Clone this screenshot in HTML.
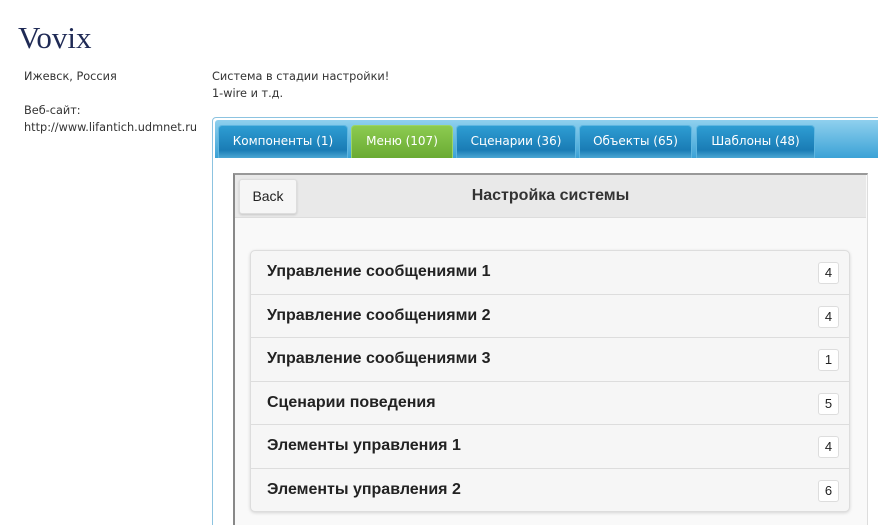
<!DOCTYPE html>
<html style="overflow:hidden;height:525px"><head><meta charset="utf-8"><style>
body{margin:0;width:878px;height:525px;overflow:hidden;background:#fff;font-family:Verdana,"DejaVu Sans",sans-serif;position:relative}
.a{position:absolute}
h1{position:absolute;left:18px;top:20px;margin:0;font:normal 31px "Liberation Serif",serif;color:#1f2a55}
.s{font-size:11.3px;color:#333;line-height:17px}
.tabs{left:212px;top:117px;width:680px;height:420px;border:1px solid #8cc3e0;border-radius:4px;background:#fff}
.band{left:215px;top:120px;width:680px;height:38px;background:linear-gradient(#8fd0ee,#3ba2d6);border-radius:3px 0 0 0}
.tab{position:absolute;top:125px;height:33px;box-sizing:border-box;border:1px solid #5eb6e0;border-bottom:none;border-radius:4px 4px 0 0;background:linear-gradient(#2e9dd3 0%,#1a7cb5 75%,#4ba7d4 100%);color:#fff;font:12px "DejaVu Sans",sans-serif;text-align:center;line-height:31px}
.tab.g{background:linear-gradient(#8ccb50,#6aab33);border-color:#9bd468}
.page{left:233px;top:173px;width:632px;height:360px;border-left:2px solid #888;border-top:2px solid #999;border-right:1px solid #ddd;background:#f9f9f9}
.hdr{left:235px;top:175px;width:631px;height:42px;background:#e9e9e9;border-bottom:1px solid #ddd;font:bold 16px "Liberation Sans",sans-serif;color:#333;text-align:center;line-height:42px}
.back{left:239px;top:179px;width:56px;height:33px;background:#f6f6f6;border:1px solid #ddd;border-radius:3px;box-shadow:0 1px 2px rgba(0,0,0,.15);font:14px "Liberation Sans",sans-serif;color:#222;text-align:center;line-height:33px}
.list{left:250px;top:250px;width:598px;border:1px solid #ddd;border-radius:5px;box-shadow:0 1px 3px rgba(0,0,0,.15);background:#f6f6f6;overflow:hidden}
.row{height:42.5px;border-top:1px solid #ddd;position:relative;font:bold 16px "Liberation Sans",sans-serif;color:#222;line-height:42px;padding-left:16px}
.row:first-child{border-top:none}
.c{position:absolute;right:10px;top:11px;width:19px;height:20px;background:#fff;border:1px solid #ddd;border-radius:3px;font:13px "Liberation Sans",sans-serif;line-height:20px;text-align:center;color:#222}
</style></head><body>
<h1>Vovix</h1>
<div class="a s" style="left:24px;top:68px">Ижевск, Россия<br><br>Веб-сайт:<br>http://www.lifantich.udmnet.ru</div>
<div class="a s" style="left:212px;top:68px">Система в стадии настройки!<br>1-wire и т.д.</div>
<div class="a tabs"></div>
<div class="a band"></div>
<div class="tab" style="left:218px;width:130px">Компоненты (1)</div>
<div class="tab g" style="left:351px;width:102px">Меню (107)</div>
<div class="tab" style="left:456px;width:120px">Сценарии (36)</div>
<div class="tab" style="left:579px;width:113px">Объекты (65)</div>
<div class="tab" style="left:696px;width:119px">Шаблоны (48)</div>
<div class="a page"></div>
<div class="a hdr">Настройка системы</div>
<div class="a back">Back</div>
<div class="a list">
<div class="row">Управление сообщениями 1<span class="c">4</span></div>
<div class="row">Управление сообщениями 2<span class="c">4</span></div>
<div class="row">Управление сообщениями 3<span class="c">1</span></div>
<div class="row">Сценарии поведения<span class="c">5</span></div>
<div class="row">Элементы управления 1<span class="c">4</span></div>
<div class="row">Элементы управления 2<span class="c">6</span></div>
</div>
</body></html>
